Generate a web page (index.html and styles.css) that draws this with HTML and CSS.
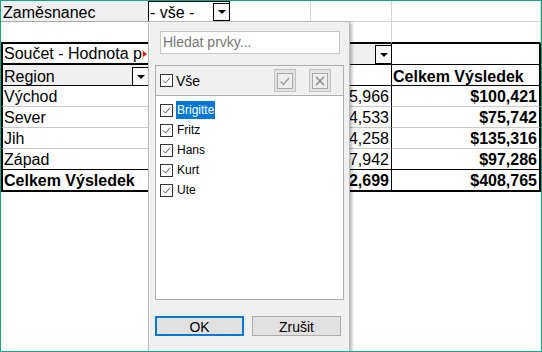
FILE: index.html
```html
<!DOCTYPE html>
<html lang="cs">
<head>
<meta charset="utf-8">
<title>Kontingenční tabulka – filtr</title>
<link rel="stylesheet" href="styles.css">
</head>
<body>
<div class="screen">
  <div class="sheet">
    <!-- row 1 -->
    <div class="c r1 a1">Zaměsnanec</div>
    <div class="c r1 b1"><span class="txt">- vše -</span><span class="dd dd-small"></span></div>
    <div class="c r1"></div>
    <div class="c r1"></div>
    <div class="c r1"></div>
    <!-- row 2 -->
    <div class="c r2"></div>
    <div class="c r2"></div>
    <div class="c r2"></div>
    <div class="c r2"></div>
    <div class="c r2"></div>
    <!-- row 3 -->
    <div class="c r3 a3"><span class="clip">Součet - Hodnota prodeje</span><span class="more"></span></div>
    <div class="c r3 fld"></div>
    <div class="c r3 fld"></div>
    <div class="c r3 fld fld-end"><span class="dd"></span></div>
    <div class="c r3 ecol"></div>
    <!-- row 4 -->
    <div class="c r4 acol a4"><span class="txt">Region</span><span class="dd"></span></div>
    <div class="c r4">Brigitte</div>
    <div class="c r4">Fritz</div>
    <div class="c r4 dcol">Hans</div>
    <div class="c r4 ecol tot">Celkem Výsledek</div>
    <!-- data rows -->
    <div class="c row acol">Východ</div>
    <div class="c row num">$48,210</div>
    <div class="c row num">$36,245</div>
    <div class="c row num dcol">$15,966</div>
    <div class="c row num ecol tot">$100,421</div>

    <div class="c row acol">Sever</div>
    <div class="c row num">$30,100</div>
    <div class="c row num">$21,109</div>
    <div class="c row num dcol">$24,533</div>
    <div class="c row num ecol tot">$75,742</div>

    <div class="c row acol">Jih</div>
    <div class="c row num">$60,000</div>
    <div class="c row num">$41,058</div>
    <div class="c row num dcol">$34,258</div>
    <div class="c row num ecol tot">$135,316</div>

    <div class="c row last acol">Západ</div>
    <div class="c row last num">$45,120</div>
    <div class="c row last num">$34,224</div>
    <div class="c row last num dcol">$17,942</div>
    <div class="c row last num ecol tot">$97,286</div>

    <div class="c r9 acol tot">Celkem Výsledek</div>
    <div class="c r9 num tot">$183,430</div>
    <div class="c r9 num tot">$132,636</div>
    <div class="c r9 num dcol tot">$92,699</div>
    <div class="c r9 num ecol tot">$408,765</div>
  </div>

  <div class="popup">
    <div class="search">Hledat prvky...</div>
    <div class="panel">
      <div class="head">
        <svg class="cb" width="13" height="13" viewBox="0 0 13 13"><rect x=".5" y=".5" width="12" height="12" fill="#fff" stroke="#333"/><path d="M3 6.5l2.5 2.5 4.5-5.2" fill="none" stroke="#555" stroke-width="1"/></svg>
        <span class="all">Vše</span>
        <span class="ibtn ibtn-check"><svg width="16" height="16" viewBox="0 0 16 16"><rect x=".5" y=".5" width="15" height="15" fill="#ededed" stroke="#a9a9a9"/><path d="M3.5 8.5l3 3 5.5-6.5" fill="none" stroke="#959595" stroke-width="1.2"/></svg></span>
        <span class="ibtn ibtn-x"><svg width="16" height="16" viewBox="0 0 16 16"><rect x=".5" y=".5" width="15" height="15" fill="#ededed" stroke="#a9a9a9"/><path d="M4 4l8 8M12 4l-8 8" fill="none" stroke="#8c8c8c" stroke-width="1.6"/></svg></span>
      </div>
      <div class="list">
        <div class="item"><svg class="cb" width="13" height="13" viewBox="0 0 13 13"><rect x=".5" y=".5" width="12" height="12" fill="#fff" stroke="#333"/><path d="M3 6.5l2.5 2.5 4.5-5.2" fill="none" stroke="#555" stroke-width="1"/></svg><span class="lbl sel">Brigitte</span></div>
        <div class="item"><svg class="cb" width="13" height="13" viewBox="0 0 13 13"><rect x=".5" y=".5" width="12" height="12" fill="#fff" stroke="#333"/><path d="M3 6.5l2.5 2.5 4.5-5.2" fill="none" stroke="#555" stroke-width="1"/></svg><span class="lbl">Fritz</span></div>
        <div class="item"><svg class="cb" width="13" height="13" viewBox="0 0 13 13"><rect x=".5" y=".5" width="12" height="12" fill="#fff" stroke="#333"/><path d="M3 6.5l2.5 2.5 4.5-5.2" fill="none" stroke="#555" stroke-width="1"/></svg><span class="lbl">Hans</span></div>
        <div class="item"><svg class="cb" width="13" height="13" viewBox="0 0 13 13"><rect x=".5" y=".5" width="12" height="12" fill="#fff" stroke="#333"/><path d="M3 6.5l2.5 2.5 4.5-5.2" fill="none" stroke="#555" stroke-width="1"/></svg><span class="lbl">Kurt</span></div>
        <div class="item"><svg class="cb" width="13" height="13" viewBox="0 0 13 13"><rect x=".5" y=".5" width="12" height="12" fill="#fff" stroke="#333"/><path d="M3 6.5l2.5 2.5 4.5-5.2" fill="none" stroke="#555" stroke-width="1"/></svg><span class="lbl">Ute</span></div>
      </div>
    </div>
    <div class="actions">
      <span class="btn btn-ok">OK</span>
      <span class="btn">Zrušit</span>
    </div>
  </div>
</div>
</body>
</html>
```
FILE: styles.css
```css
html, body {
  margin: 0;
  padding: 0;
  background: #fff;
}

.screen {
  position: relative;
  width: 542px;
  height: 352px;
  box-sizing: border-box;
  border: 1px solid #17a589;
  overflow: hidden;
  background: #fff;
  font-family: "Liberation Sans", Arial, sans-serif;
  color: #000;
}

/* ---------- spreadsheet ---------- */
.sheet {
  display: grid;
  grid-template-columns: 148px 81px 81px 81px 149px;
  grid-template-rows: 21px 22px 21px 21px 21px 21px 21px 21px 22px;
  font-size: 16px;
}

.c {
  box-sizing: border-box;
  display: flex;
  align-items: flex-start;
  border-right: 1px solid #d4d4d4;
  border-bottom: 1px solid #d4d4d4;
  padding: 1px 2px 0 1px;
  line-height: 19px;
  white-space: nowrap;
  overflow: hidden;
}

.num { justify-content: flex-end; }
.tot { font-weight: bold; }

.r1 { padding-top: 2px; }
.a1 {
  background: #efefef;
  border-bottom-color: #a8a8a8;
  border-right-color: #000;
  padding-left: 2px;
}
.b1 {
  border-top: 1px solid #000;
  border-right-color: #000;
  border-bottom-color: #000;
  padding: 1px 0 0 1px;
  justify-content: space-between;
}

.r2 { border-bottom: 2px solid #000; }

.r3 {
  padding-top: 0;
  border-bottom-color: #000;
}
.a3 {
  border-left: 2px solid #000;
  border-right-color: #000;
  border-bottom: 2px solid #000;
  padding-right: 1px;
}
.clip {
  flex: 1;
  min-width: 0;
  overflow: hidden;
}
.more {
  align-self: center;
  width: 0;
  height: 0;
  border-top: 3.5px solid transparent;
  border-bottom: 3.5px solid transparent;
  border-left: 4px solid #e01010;
}
.fld {
  background: #efefef;
  border-right-color: #efefef;
}
.fld-end {
  border-right-color: #000;
  justify-content: flex-end;
  padding-right: 0;
}

.r4 { border-bottom-color: #000; padding-top: 2px; }
.a4 {
  background: #efefef;
  justify-content: space-between;
  padding-right: 0;
}

.acol {
  border-left: 2px solid #000;
  border-right-color: #000;
}
.dcol { border-right-color: #000; }
.ecol { border-right: 2px solid #000; }

.row { border-bottom-color: #c8c8c8; }
.row.last { border-bottom-color: #000; }
.r9 { border-bottom: 2px solid #000; }

/* cell drop-down button */
.dd {
  align-self: center;
  flex: none;
  width: 16px;
  height: 19px;
  box-sizing: border-box;
  border: 1px solid #000;
  border-right: none;
  background: #f7f7f7;
  display: flex;
  align-items: center;
  justify-content: center;
}
.dd::after {
  content: "";
  width: 0;
  height: 0;
  border-left: 4px solid transparent;
  border-right: 4px solid transparent;
  border-top: 4px solid #000;
}
.dd-small {
  height: 18px;
  margin-right: 0;
}
.r3 .dd, .r4 .dd { margin-top: 1px; }
.b1 .dd { margin-top: 0; }

/* ---------- autofilter popup ---------- */
.popup {
  position: absolute;
  left: 147px;
  top: 20px;
  width: 202px;
  height: 345px;
  box-sizing: border-box;
  background: #f0f0f0;
  border: 1px solid #bababa;
  box-shadow: 2px 2px 3px rgba(0, 0, 0, 0.28);
  padding: 9px 5px 0 6px;
  display: flex;
  flex-direction: column;
  font-size: 14px;
}

.search {
  height: 23px;
  box-sizing: border-box;
  margin: 0 4px 0 5px;
  border: 1px solid #c6c6c6;
  background: #fff;
  padding-left: 2px;
  line-height: 21px;
  color: #767676;
}

.panel {
  margin-top: 11px;
  border: 1px solid #adadad;
}

.head {
  height: 30px;
  box-sizing: border-box;
  border-bottom: 1px solid #adadad;
  display: flex;
  align-items: center;
  padding-left: 4px;
}
.cb { flex: none; display: block; }
.all {
  margin-left: 3px;
  font-size: 14px;
}
.ibtn {
  width: 22px;
  height: 23px;
  box-sizing: border-box;
  border: 1px solid #c0c0c0;
  background: #e3e3e3;
  display: flex;
  align-items: center;
  justify-content: center;
}
.ibtn svg { display: block; }
.ibtn-check { margin-left: auto; }
.ibtn-x { margin-left: 13px; margin-right: 12px; }

.list {
  height: 203px;
  box-sizing: border-box;
  background: #fff;
  padding: 4px 0 0 4px;
}
.item {
  height: 20px;
  display: flex;
  align-items: center;
}
.lbl {
  margin-left: 3px;
  padding: 0 1px;
  font-size: 12px;
  line-height: 18px;
}
.sel {
  background: #0078d7;
  color: #fff;
}

.actions {
  margin-top: 16px;
  display: flex;
  gap: 8px;
}
.btn {
  width: 89px;
  height: 20px;
  box-sizing: border-box;
  border: 1px solid #adadad;
  background: #e1e1e1;
  display: flex;
  align-items: center;
  justify-content: center;
  font-size: 14px;
  padding-top: 1px;
}
.btn-ok { border: 2px solid #0078d7; }
```
